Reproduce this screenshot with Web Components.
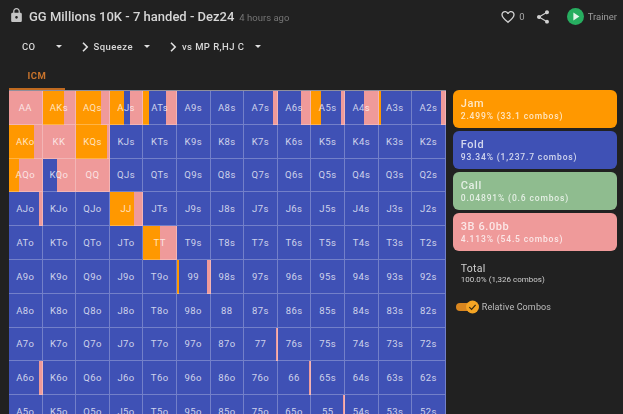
<!DOCTYPE html>
<html>
<head>
<meta charset="utf-8">
<title>Range</title>
<style>
    html, body { margin: 0; height: 414px; overflow: hidden; background: #212121; }
    body { font-family: 'Roboto', sans-serif; color: #e8e8e8; }
</style>
</head>
<body>
<range-page></range-page>

<script>
// Colores de cada accion
const COLORS = { j: '#ff9800', f: '#3f51b5', c: '#8fbc8f', r: '#ef9a9a' };

// Reparto de cada mano que no es 100% fold. Porcentajes en orden de pintado.
const MIXES = {
    AA: 'r100', AKs: 'j65 r35', AQs: 'j75 r25', AJs: 'j42 f18 r40', ATs: 'j18 f50 r32',
    A7s: 'f85 r15', A6s: 'f70 r30', A5s: 'j30 f59 r11', A4s: 'f57 r43', A3s: 'j8 f92', A2s: 'f86 r14',
    AKo: 'j74 r26', KK: 'r100', KQs: 'j93 r7',
    AQo: 'j30 r70', KQo: 'r2 f41 r57', QQ: 'r100',
    AJo: 'f88 r12', JJ: 'j72 r28',
    TT: 'j50 r50',
    99: 'j5 f85 r10',
    77: 'f96 r4', A6o: 'f90 r10', 66: 'f92 r8', 55: 'f95 r5'
};

class AppHeader extends HTMLElement {
    constructor() {
        super();
        this.shadow = this.attachShadow({ mode: 'open' });
    }

    connectedCallback() {
        this.render();
    }

    render() {
        this.shadow.innerHTML =
        `
        <style>
            :host { display: flex; align-items: center; height: 33px; padding: 0 6px 0 11px; box-sizing: border-box; }
            svg { display: block; fill: currentColor; }
            .lock { color: #c4c4c4; margin-right: 7px; margin-top: -3px; }
            h1 { margin: 0; font-size: 13px; font-weight: 500; color: #d6d6d6; white-space: nowrap; }
            .ago { margin-left: 5px; font-size: 9.5px; color: #757575; margin-top: 2px; white-space: nowrap; }
            .right { margin-left: auto; display: flex; align-items: center; color: #d0d0d0; }
            .count { font-size: 9.5px; margin: 0 10px 0 3px; color: #a8a8a8; }
            .trainer { font-size: 9.5px; margin-left: 4px; color: #9c9c9c; }
            .share { margin-right: 16px; }
        </style>

        <svg class="lock" width="11" height="14" viewBox="4 1 16 21"><path d="M18 8h-1V6c0-2.76-2.24-5-5-5S7 3.24 7 6v2H6c-1.1 0-2 .9-2 2v10c0 1.1.9 2 2 2h12c1.1 0 2-.9 2-2V10c0-1.1-.9-2-2-2zm-6 9c-1.1 0-2-.9-2-2s.9-2 2-2 2 .9 2 2-.9 2-2 2zm3.1-9H8.9V6c0-1.71 1.39-3.1 3.1-3.1 1.71 0 3.1 1.39 3.1 3.1v2z"/></svg>
        <h1><slot></slot></h1>
        <span class="ago">4 hours ago</span>
        <div class="right">
            <svg width="16" height="16" viewBox="0 0 24 24"><path d="M16.5 3c-1.74 0-3.41.81-4.5 2.09C10.91 3.81 9.24 3 7.5 3 4.42 3 2 5.42 2 8.5c0 3.78 3.4 6.86 8.55 11.54L12 21.35l1.45-1.32C18.6 15.36 22 12.28 22 8.5 22 5.42 19.58 3 16.5 3zm-4.4 15.55l-.1.1-.1-.1C7.14 14.24 4 11.39 4 8.5 4 6.5 5.5 5 7.5 5c1.54 0 3.04.99 3.57 2.36h1.87C13.46 5.99 14.96 5 16.5 5c2 0 3.5 1.5 3.5 3.5 0 2.89-3.14 5.74-7.9 10.05z"/></svg>
            <span class="count">0</span>
            <svg class="share" width="16" height="16" viewBox="0 0 24 24"><path d="M18 16.08c-.76 0-1.44.3-1.96.77L8.91 12.7c.05-.23.09-.46.09-.7s-.04-.47-.09-.7l7.05-4.11c.54.5 1.25.81 2.04.81 1.66 0 3-1.34 3-3s-1.34-3-3-3-3 1.34-3 3c0 .24.04.47.09.7L8.04 9.81C7.5 9.31 6.79 9 6 9c-1.66 0-3 1.34-3 3s1.34 3 3 3c.79 0 1.5-.31 2.04-.81l7.12 4.16c-.05.21-.08.43-.08.65 0 1.61 1.31 2.92 2.92 2.92s2.92-1.31 2.92-2.92-1.31-2.92-2.92-2.92z"/></svg>
            <svg width="17" height="17" viewBox="0 0 24 24"><circle cx="12" cy="12" r="12" fill="#27ae60"/><path d="M9 6.5v11l8.5-5.5z" fill="#e4f5ea"/></svg>
            <span class="trainer">Trainer</span>
        </div>
        `;
    }
}

// Un paso del selector: CO > Squeeze > vs MP
class CrumbItem extends HTMLElement {
    constructor() {
        super();
        this.shadow = this.attachShadow({ mode: 'open' });
    }

    connectedCallback() {
        this.render();
    }

    render() {
        const chevron = this.hasAttribute('first') ? '' :
            `<svg class="chev" width="7" height="10" viewBox="0 0 7 10"><path d="M1 .8 5.2 5 1 9.2" fill="none" stroke="#e0e0e0" stroke-width="1.6"/></svg>`;

        this.shadow.innerHTML =
        `
        <style>
            :host { display: flex; align-items: center; font-size: 9.5px; font-weight: 500; letter-spacing: .42px; color: #d8d8d8; white-space: nowrap; }
            .chev { margin-right: 5px; }
            .caret { width: 0; height: 0; margin-left: ${this.getAttribute('gap') || 11}px; border: 3.2px solid transparent; border-top: 3.6px solid #e0e0e0; border-bottom: 0; }
        </style>

        ${chevron}<slot></slot><span class="caret"></span>
        `;
    }
}

class CrumbBar extends HTMLElement {
    constructor() {
        super();
        this.shadow = this.attachShadow({ mode: 'open' });
    }

    connectedCallback() {
        this.shadow.innerHTML =
        `
        <style>
            :host { display: flex; align-items: center; gap: 20px; height: 27px; padding-left: 22px; box-sizing: border-box; }
        </style>
        <slot></slot>
        `;
    }
}

class TabBar extends HTMLElement {
    constructor() {
        super();
        this.shadow = this.attachShadow({ mode: 'open' });
    }

    connectedCallback() {
        this.shadow.innerHTML =
        `
        <style>
            :host { display: block; height: 30px; margin-left: 9px; box-sizing: border-box; }
            div { display: flex; align-items: center; justify-content: center; box-sizing: border-box; width: 56px; height: 30px; padding-top: 2px;
                  border-bottom: 2px solid #c06a20; color: #c9742c; font-size: 9.5px; font-weight: 700; letter-spacing: .5px; }
        </style>
        <div><slot></slot></div>
        `;
    }
}

class HandCell extends HTMLElement {
    constructor() {
        super();
        this.shadow = this.attachShadow({ mode: 'open' });
    }

    connectedCallback() {
        this.render();
    }

    render() {
        const hand = this.getAttribute('hand');
        const mix = (MIXES[hand] || 'f100').split(' ');
        const bars = mix.map(part =>
            `<i style="width:${part.slice(1)}%;background:${COLORS[part[0]]}"></i>`).join('');

        this.shadow.innerHTML =
        `
        <style>
            :host { display: grid; min-width: 0; min-height: 0; overflow: hidden; }
            .bars, .label { grid-area: 1 / 1; }
            .bars { display: flex; }
            i { display: block; height: 100%; }
            .label { display: flex; align-items: center; justify-content: center; box-sizing: border-box;
                     border-right: 1px solid rgba(255,255,255,.27); border-bottom: 1px solid rgba(255,255,255,.27);
                     font-size: 9.5px; letter-spacing: .42px; color: rgba(255,255,255,.75); }
        </style>

        <div class="bars">${bars}</div>
        <div class="label">${hand}</div>
        `;
    }
}

class RangeGrid extends HTMLElement {
    constructor() {
        super();
        this.shadow = this.attachShadow({ mode: 'open' });
    }

    connectedCallback() {
        const ranks = 'AKQJT98765432';
        let cells = '';
        for (let i = 0; i < 13; i++) {
            for (let j = 0; j < 13; j++) {
                let hand = ranks[i] + ranks[i];
                if (j > i) hand = ranks[i] + ranks[j] + 's';
                if (j < i) hand = ranks[j] + ranks[i] + 'o';
                cells += `<hand-cell hand="${hand}"></hand-cell>`;
            }
        }

        this.shadow.innerHTML =
        `
        <style>
            :host { display: grid; flex: none; grid-template-columns: repeat(13, 33.6px); grid-auto-rows: 33.8px; margin-left: 9px;
                    border-top: 1px solid #8f8f9c; }
        </style>
        ${cells}
        `;
    }
}

class LegendCard extends HTMLElement {
    constructor() {
        super();
        this.shadow = this.attachShadow({ mode: 'open' });
    }

    connectedCallback() {
        const color = COLORS[this.getAttribute('action')];
        this.shadow.innerHTML =
        `
        <style>
            :host { display: block; height: 38px; box-sizing: border-box; padding: 7px 8px 0; border-radius: 6px; background: ${color}; color: rgba(255,255,255,.76); }
            .name { font-size: 11px; font-weight: 500; letter-spacing: .6px; line-height: 13px; }
            .sub { font-size: 8.5px; font-weight: 500; letter-spacing: .85px; line-height: 12px; white-space: nowrap; }
        </style>
        <div class="name">${this.getAttribute('name')}</div>
        <div class="sub"><slot></slot></div>
        `;
    }
}

class RelativeToggle extends HTMLElement {
    constructor() {
        super();
        this.shadow = this.attachShadow({ mode: 'open' });
    }

    connectedCallback() {
        this.shadow.innerHTML =
        `
        <style>
            :host { display: flex; align-items: center; height: 14px; margin-left: 3px; font-size: 9px; letter-spacing: .12px; color: #bdbdbd; white-space: nowrap; }
            svg { display: block; margin-right: 2px; }
        </style>
        <svg width="24" height="14" viewBox="0 0 24 14">
            <rect x="0" y="3" width="20" height="8" rx="4" fill="#d9861f"/>
            <circle cx="16.5" cy="7" r="6.5" fill="#f5a524"/>
            <path d="M13.3 7.1l2.3 2.3 4-4.6" fill="none" stroke="#3a2a10" stroke-width="1.2"/>
        </svg>
        <slot></slot>
        `;
    }
}

class LegendPanel extends HTMLElement {
    constructor() {
        super();
        this.shadow = this.attachShadow({ mode: 'open' });
    }

    connectedCallback() {
        this.shadow.innerHTML =
        `
        <style>
            :host { display: flex; flex-direction: column; width: 164px; margin-left: 7px; flex: none; }
            .cards { display: flex; flex-direction: column; gap: 3px; }
            .total { padding: 11px 0 0 8px; height: 36px; color: #cfcfcf; }
            .total b { display: block; font-size: 10.5px; font-weight: 400; letter-spacing: .3px; line-height: 13px; }
            .total span { display: block; font-size: 8px; line-height: 10px; white-space: nowrap; }
            .toggle { margin-top: 2px; }
        </style>
        <div class="cards">
            <legend-card action="j" name="Jam">2.499% (33.1 combos)</legend-card>
            <legend-card action="f" name="Fold">93.34% (1,237.7 combos)</legend-card>
            <legend-card action="c" name="Call">0.04891% (0.6 combos)</legend-card>
            <legend-card action="r" name="3B 6.0bb">4.113% (54.5 combos)</legend-card>
        </div>
        <div class="total">
            <b>Total</b>
            <span>100.0% (1,326 combos)</span>
        </div>
        <div class="toggle"><relative-toggle>Relative Combos</relative-toggle></div>
        `;
    }
}

class RangePage extends HTMLElement {
    constructor() {
        super();
        this.shadow = this.attachShadow({ mode: 'open' });
    }

    connectedCallback() {
        this.shadow.innerHTML =
        `
        <style>
            :host { display: block; height: 414px; overflow: hidden; filter: blur(.35px); }
            main { display: flex; align-items: flex-start; }
        </style>
        <app-header>GG Millions 10K - 7 handed - Dez24</app-header>
        <crumb-bar>
            <crumb-item first gap="20">CO</crumb-item>
            <crumb-item>Squeeze</crumb-item>
            <crumb-item>vs MP R,HJ C</crumb-item>
        </crumb-bar>
        <tab-bar>ICM</tab-bar>
        <main>
            <range-grid></range-grid>
            <legend-panel></legend-panel>
        </main>
        `;
    }
}

// Al definir un elemento ha de contener un guion
customElements.define('app-header', AppHeader);
customElements.define('crumb-item', CrumbItem);
customElements.define('crumb-bar', CrumbBar);
customElements.define('tab-bar', TabBar);
customElements.define('hand-cell', HandCell);
customElements.define('range-grid', RangeGrid);
customElements.define('legend-card', LegendCard);
customElements.define('relative-toggle', RelativeToggle);
customElements.define('legend-panel', LegendPanel);
customElements.define('range-page', RangePage);
</script>
</body>
</html>
